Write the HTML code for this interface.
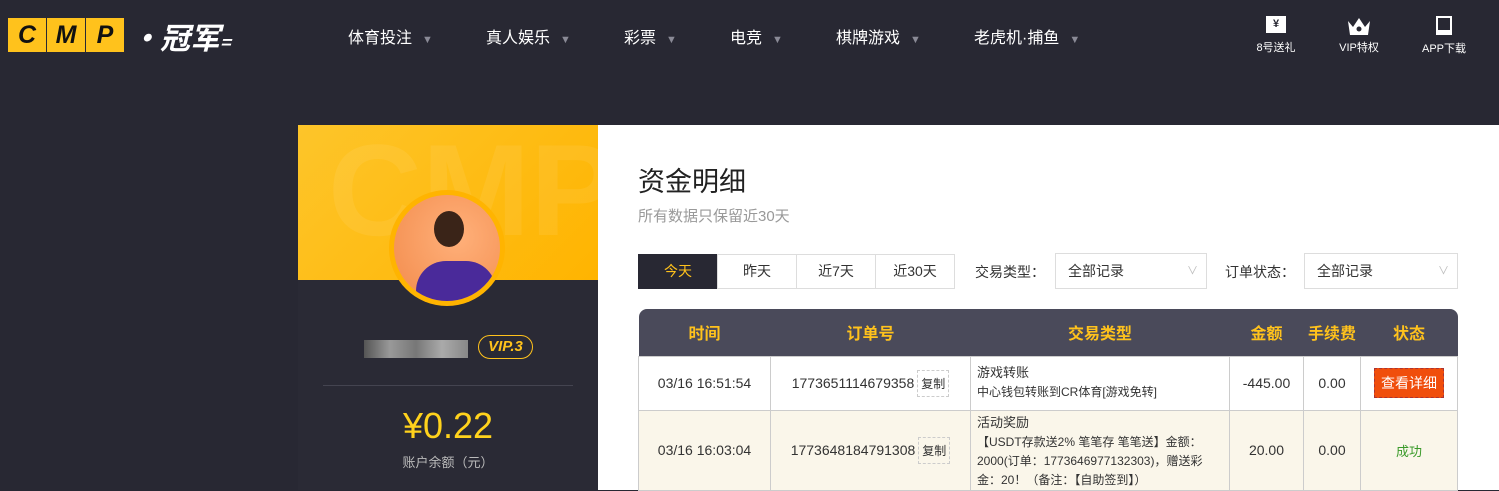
<!DOCTYPE html>
<html><head><meta charset="utf-8"><style>
*{margin:0;padding:0;box-sizing:border-box}
body{width:1499px;height:490px;overflow:hidden;background:#282833;font-family:"Liberation Sans","Noto Sans CJK SC",sans-serif;position:relative}
.abs{position:absolute}
.nav{color:#fff;font-size:16px;top:24px}
.nav span{color:#8a8a96;font-size:11px;margin-left:10px}
.ic{color:#fff;font-size:11px;text-align:center;top:16px;width:60px}
.left{left:298px;top:125px;width:300px;height:365px;background:#2a2a35}
.yel{left:0;top:0;width:300px;height:155px;background:linear-gradient(135deg,#fdc52a,#ffb400);overflow:hidden}
.right{left:598px;top:125px;width:901px;height:365px;background:#fff}
.btn{top:129px;height:35px;border:1px solid #ddd;font-size:14px;text-align:center;line-height:33px;color:#333;position:absolute}
.sel{position:absolute;top:128px;height:36px;border:1px solid #ddd;font-size:14px;line-height:34px;padding-left:12px;color:#333}
.sel i{position:absolute;right:8px;color:#bbb;font-style:normal;font-size:11px}
table{position:absolute;left:40px;top:184px;width:820px;border-collapse:collapse;font-size:14px;color:#333}
th{background:#4a4a5a;color:#ffc21c;height:47px;font-size:16px;font-weight:bold}
td{border:1px solid #ccc;text-align:center}
td.t{text-align:left;font-size:12px;padding-left:6px;padding-right:10px;line-height:19px;vertical-align:top;padding-top:6px}
.cp{display:inline-block;border:1px dashed #ccc;font-size:12px;padding:4px 3px;margin-left:3px}
.lb{width:38px;height:34px;background:#ffc21c;color:#111;font:italic bold 25px 'Liberation Sans';text-align:center;line-height:34px}
</style></head><body>
<div class="abs" style="left:8px;top:18px;display:flex;gap:1px">
<div class="lb">C</div><div class="lb">M</div><div class="lb">P</div>
</div>
<div class="abs" style="left:130px;top:14px;color:#fff;font:italic bold 30px 'Noto Sans CJK SC',sans-serif">·冠军<span style="font-size:18px">=</span></div>
<div class="abs nav" style="left:348px">体育投注<span>▼</span></div>
<div class="abs nav" style="left:486px">真人娱乐<span>▼</span></div>
<div class="abs nav" style="left:624px">彩票<span>▼</span></div>
<div class="abs nav" style="left:730px">电竞<span>▼</span></div>
<div class="abs nav" style="left:836px">棋牌游戏<span>▼</span></div>
<div class="abs nav" style="left:974px">老虎机·捕鱼<span>▼</span></div>
<div class="abs ic" style="left:1246px"><div style="margin:0 auto 6px;width:20px;height:17px;background:#fff;color:#282833;font-size:11px;font-weight:bold;line-height:17px">¥</div>8号送礼</div>
<div class="abs ic" style="left:1329px"><svg width="26" height="20" viewBox="0 0 26 20" style="display:block;margin:0 auto 3px"><path d="M2 5 L7 11 L13 2 L19 11 L24 5 L22 19 H4 Z" fill="#fff"/><circle cx="13" cy="13" r="2.5" fill="#282833"/></svg>VIP特权</div>
<div class="abs ic" style="left:1414px"><div style="margin:0 auto 5px;width:16px;height:19px;border:2px solid #fff;border-bottom-width:5px"></div>APP下载</div>

<div class="abs left">
<div class="abs yel"><div style="position:absolute;left:30px;top:-10px;font:bold 130px 'Liberation Sans';color:rgba(255,255,255,.07)">CMP</div></div>
<div class="abs" style="left:91px;top:65px;width:116px;height:116px;border-radius:50%;background:#ffb400;padding:5px"><div style="width:106px;height:106px;border-radius:50%;background:radial-gradient(circle at 60% 40%,#ffb07a,#f28a4a);overflow:hidden;position:relative"><div style="position:absolute;left:40px;top:16px;width:30px;height:36px;border-radius:50%;background:#3a2418"></div><div style="position:absolute;left:22px;top:66px;width:80px;height:60px;border-radius:30px 30px 0 0;background:#4a2a9a"></div></div></div>
<div class="abs" style="left:66px;top:215px;width:104px;height:18px;background:linear-gradient(90deg,#555,#999,#777,#aaa,#888)"></div>
<div class="abs" style="left:180px;top:210px;width:55px;height:24px;border:1.5px solid #ffc21c;border-radius:12px;color:#ffc21c;font:italic bold 15px 'Liberation Sans';text-align:center;line-height:21px">VIP.3</div>
<div class="abs" style="left:25px;top:260px;width:250px;height:1px;background:#444450"></div>
<div class="abs" style="left:0;top:280px;width:300px;text-align:center;color:#ffd21c;font-size:36px">¥0.22</div>
<div class="abs" style="left:0;top:327px;width:300px;text-align:center;color:#bbb;font-size:13px">账户余额（元）</div>
</div>

<div class="abs right">
<div class="abs" style="left:40px;top:35px;font-size:27px;color:#222">资金明细</div>
<div class="abs" style="left:40px;top:80px;font-size:15px;color:#999">所有数据只保留近30天</div>
<div class="btn" style="left:40px;width:80px;background:#282833;color:#ffc21c;border-color:#282833">今天</div>
<div class="btn" style="left:119px;width:80px">昨天</div>
<div class="btn" style="left:198px;width:80px">近7天</div>
<div class="btn" style="left:277px;width:80px">近30天</div>
<div class="abs" style="left:377px;top:137px;font-size:14px;color:#333">交易类型：</div>
<div class="sel" style="left:457px;width:152px">全部记录<i>∨</i></div>
<div class="abs" style="left:627px;top:137px;font-size:14px;color:#333">订单状态：</div>
<div class="sel" style="left:706px;width:154px">全部记录<i>∨</i></div>
<table>
<tr><th style="width:132px;border-top-left-radius:8px">时间</th><th style="width:200px">订单号</th><th style="width:259px">交易类型</th><th style="width:74px">金额</th><th style="width:57px">手续费</th><th style="border-top-right-radius:8px">状态</th></tr>
<tr style="height:54px"><td>03/16 16:51:54</td><td>1773651114679358<span class="cp">复制</span></td><td class="t"><span style="font-size:13px">游戏转账</span><br>中心钱包转账到CR体育[游戏免转]</td><td>-445.00</td><td>0.00</td><td><span style="display:inline-block;background:#f04e0c;color:#fff;padding:4px 6px;border:1px dashed #a33">查看详细</span></td></tr>
<tr style="height:78px;background:#faf6ea"><td>03/16 16:03:04</td><td>1773648184791308<span class="cp">复制</span></td><td class="t" style="padding-top:2px"><span style="font-size:13px">活动奖励</span><br>【USDT存款送2% 笔笔存 笔笔送】金额：<br>2000(订单：1773646977132303)，赠送彩<br>金：20！（备注：【自助签到】）</td><td>20.00</td><td>0.00</td><td style="color:#3a9a2a;font-size:13px">成功</td></tr>
</table>
</div>
</body></html>
